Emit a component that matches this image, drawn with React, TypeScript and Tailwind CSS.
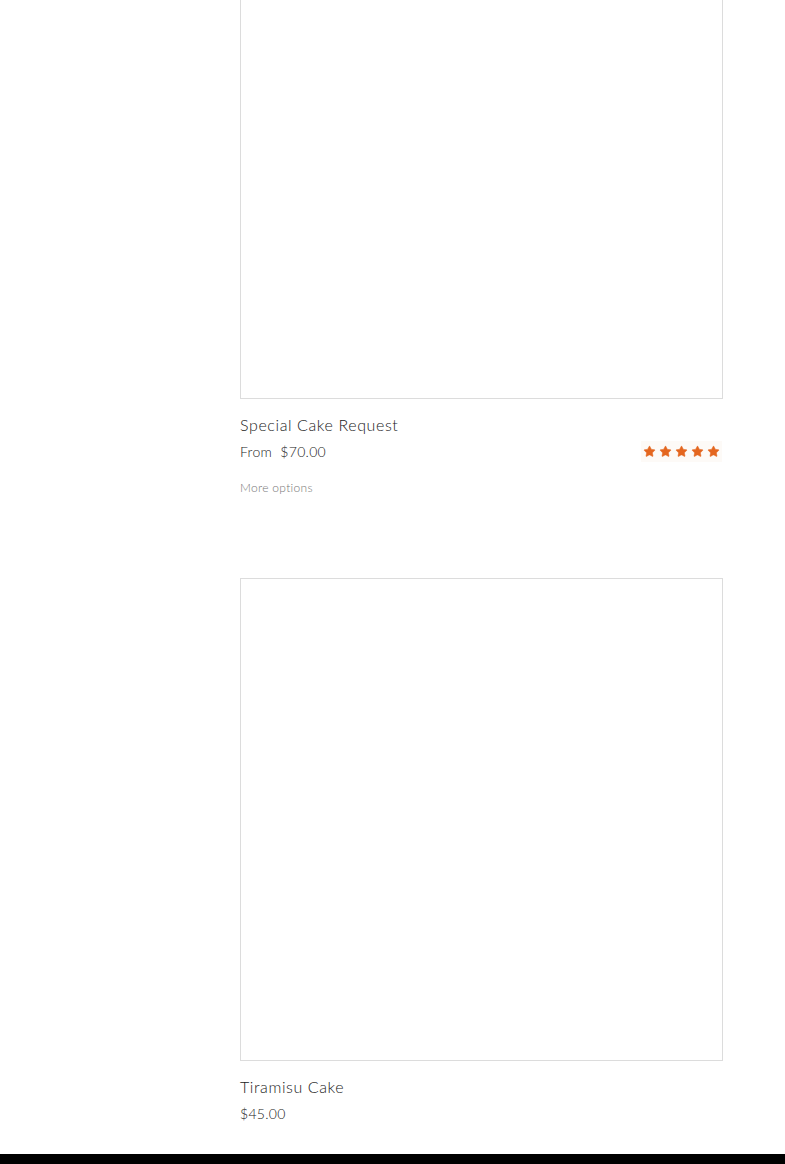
import { Star } from "lucide-react";

const FONT = { fontFamily: "Lato, 'Noto Sans', sans-serif" };

function StarRow() {
  return (
    <div className="flex items-center gap-[3px] bg-[#fdfaf7] px-[2px] py-[4px]">
      {[0, 1, 2, 3, 4].map((i) => (
        <Star key={i} className="w-[13px] h-[13px] text-[#e4661f] fill-[#e4661f]" strokeWidth={1} />
      ))}
    </div>
  );
}

export default function App() {
  return (
    <div className="min-h-[1164px] bg-white flex flex-col" style={FONT}>
      <div className="flex-1 pl-[240px] pr-[62px]">
        {/* Special Cake Request */}
        <div className="-mt-[84px]">
          <div className="h-[483px] border border-[#dcdcdc]" />
          <div className="mt-[16px] flex items-start justify-between">
            <div>
              <div className="text-[16px] leading-[20px] text-[#222] font-light tracking-[0.6px]">
                Special Cake Request
              </div>
              <div className="mt-[8px] text-[14px] leading-[18px] text-[#222] font-light tracking-[0.3px]">
                From&nbsp;&nbsp;$70.00
              </div>
              <div className="mt-[19px] text-[12px] leading-[16px] text-[#777] font-light tracking-[0.3px]">
                More options
              </div>
            </div>
            <div className="mt-[26px] mr-[1px]">
              <StarRow />
            </div>
          </div>
        </div>

        {/* Tiramisu Cake */}
        <div className="mt-[82px]">
          <div className="h-[483px] border border-[#dcdcdc]" />
          <div className="mt-[16px] text-[16px] leading-[20px] text-[#222] font-light tracking-[0.6px]">
            Tiramisu Cake
          </div>
          <div className="mt-[8px] text-[14px] leading-[18px] text-[#222] font-light tracking-[0.3px]">
            $45.00
          </div>
        </div>
      </div>
      <div className="h-[10px] bg-black" />
    </div>
  );
}
